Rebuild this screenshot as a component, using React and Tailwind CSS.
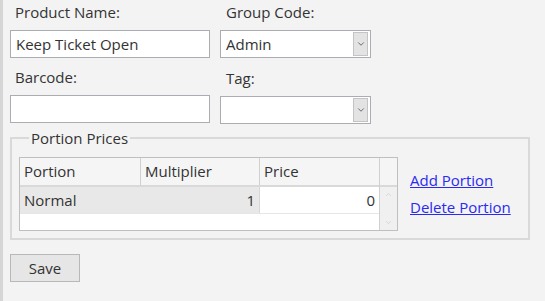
import { ChevronDown, ChevronUp } from "lucide-react";

const Field = ({ label, value, className = "" }) => (
  <div className={`flex flex-col ${className}`}>
    <label className="pl-[5px] h-[29px] pt-[1px] leading-[20px]">{label}</label>
    <div className="h-[28px] w-[200px] border border-[#abadb3] bg-white px-[5px] leading-[26px]">
      {value}
    </div>
  </div>
);

const Combo = ({ label, value }) => (
  <div className="flex flex-col">
    <label className="pl-[6px] h-[29px] pt-[1px] leading-[20px]">{label}</label>
    <div className="h-[28px] w-[151px] border border-[#abadb3] bg-white flex">
      <span className="flex-1 px-[5px] leading-[26px]">{value}</span>
      <span className="w-[15px] my-[1px] mr-[2px] bg-[#e3e3e3] border border-[#c4c4c4] flex items-center justify-center">
        <ChevronDown size={10} strokeWidth={2} className="text-[#555]" />
      </span>
    </div>
  </div>
);

const App = () => {
  return (
    <div
      className="w-[545px] h-[301px] bg-[#f3f3f3] border-l-[3px] border-[#d6d6d6] text-[15px] text-[#333] overflow-hidden"
      style={{ fontFamily: '"Open Sans", "Noto Sans", sans-serif' }}
    >
      <div className="pl-[7px] pt-[1px]">
        <div className="flex gap-[10px]">
          <div className="flex flex-col">
            <Field label="Product Name:" value="Keep Ticket Open" />
            <Field label="Barcode:" value="" className="mt-[8px]" />
          </div>
          <div className="flex flex-col">
            <Combo label="Group Code:" value="Admin" />
            <div className="mt-[9px]">
              <Combo label="Tag:" value="" />
            </div>
          </div>
        </div>

        <fieldset className="mt-[5px] w-[520px] h-[111px] border-2 border-[#d9d9d9] pl-[7px] pr-2 pb-2">
          <legend className="px-[2px] ml-[10px] leading-[18px]">Portion Prices</legend>
          <div className="flex items-start">
            <div className="mt-[10px] w-[379px] h-[74px] border border-[#bfbfbf] bg-white flex">
              <div className="flex-1 flex flex-col">
                <div className="flex h-[29px] bg-[#f5f5f5] border-b-2 border-[#d9d9d9] leading-[26px]">
                  <div className="w-[121px] px-[4px] border-r border-[#d0d0d0]">Portion</div>
                  <div className="w-[119px] px-[4px] border-r border-[#d0d0d0]">Multiplier</div>
                  <div className="flex-1 px-[4px]">Price</div>
                </div>
                <div className="flex h-[27px] leading-[26px] border-b border-[#e6e6e6]">
                  <div className="w-[121px] px-[4px] bg-[#e8e8e8]">Normal</div>
                  <div className="w-[119px] px-[4px] bg-[#e8e8e8] text-right border-r border-[#d8d8d8]">1</div>
                  <div className="flex-1 px-[4px] text-right">0</div>
                </div>
              </div>
              <div className="w-[18px] border-l border-[#d0d0d0] flex flex-col">
                <div className="h-[29px] bg-[#f5f5f5] border-b-2 border-[#d9d9d9]" />
                <div className="flex-1 bg-[#f0f0f0] flex flex-col items-center justify-between py-[3px]">
                  <ChevronUp size={9} strokeWidth={1.5} className="text-[#c4c4c4]" />
                  <ChevronDown size={9} strokeWidth={1.5} className="text-[#c4c4c4]" />
                </div>
              </div>
            </div>
            <div className="ml-[12px] mt-[22px] flex flex-col gap-[5px] leading-[22px]">
              <a href="#" className="text-[#2a2af0] underline">Add Portion</a>
              <a href="#" className="text-[#2a2af0] underline">Delete Portion</a>
            </div>
          </div>
        </fieldset>

        <button className="mt-[14px] w-[70px] h-[28px] border border-[#b8b8b8] bg-[#e6e6e6] leading-[26px]">
          Save
        </button>
      </div>
    </div>
  );
};

export default App;
